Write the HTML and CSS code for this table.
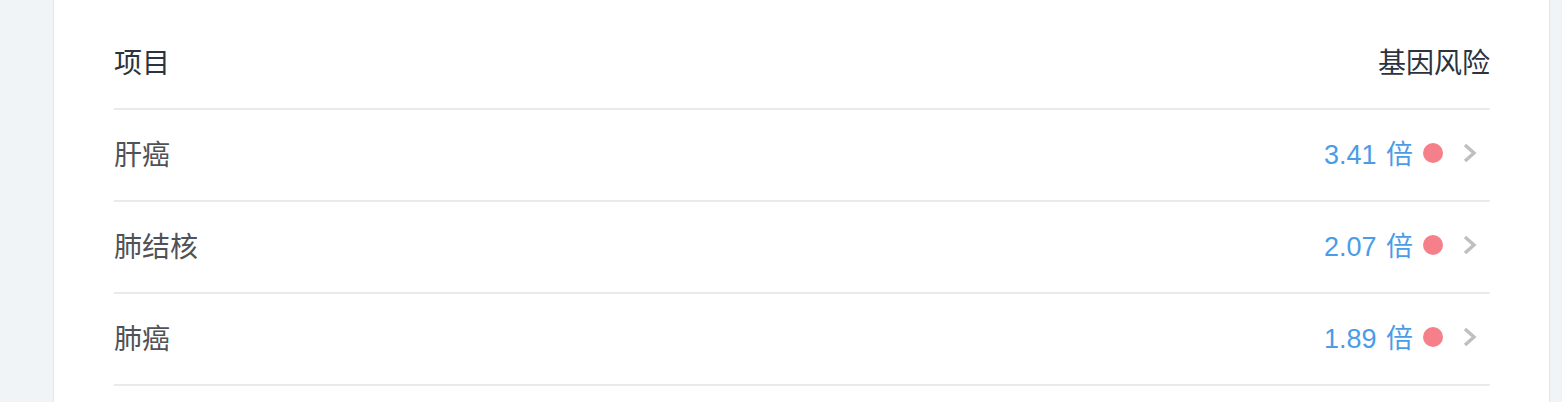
FILE: index.html
```html
<!DOCTYPE html>
<html lang="zh">
<head>
<meta charset="utf-8">
<link rel="stylesheet" href="styles.css">
</head>
<body>
<div class="page">
  <div class="card">
    <div class="row head">
      <span class="label">项目</span>
      <span class="label">基因风险</span>
    </div>
    <div class="row">
      <span class="name">肝癌</span>
      <span class="risk"><span class="value">3.41 倍</span><span class="dot"></span><svg class="chev" width="14" height="20" viewBox="0 0 14 20"><polyline points="2,2 11,10 2,18" fill="none" stroke="#bfbfbf" stroke-width="3.4"/></svg></span>
    </div>
    <div class="row">
      <span class="name">肺结核</span>
      <span class="risk"><span class="value">2.07 倍</span><span class="dot"></span><svg class="chev" width="14" height="20" viewBox="0 0 14 20"><polyline points="2,2 11,10 2,18" fill="none" stroke="#bfbfbf" stroke-width="3.4"/></svg></span>
    </div>
    <div class="row">
      <span class="name">肺癌</span>
      <span class="risk"><span class="value">1.89 倍</span><span class="dot"></span><svg class="chev" width="14" height="20" viewBox="0 0 14 20"><polyline points="2,2 11,10 2,18" fill="none" stroke="#bfbfbf" stroke-width="3.4"/></svg></span>
    </div>
  </div>
</div>
</body>
</html>
```

FILE: styles.css
```css
html, body {
  margin: 0;
  padding: 0;
  background: #f0f4f7;
}
body {
  font-family: "Liberation Sans", "Noto Sans CJK SC", sans-serif;
  height: 402px;
  overflow: hidden;
}
.page {
  padding-left: 53px;
  width: 1497px;
}
.card {
  background: #fff;
  border-left: 1px solid #e3e7ea;
  border-right: 1px solid #e3e7ea;
  padding: 18px 59px 0 60px;
  height: 384px;
}
.row {
  box-sizing: border-box;
  display: flex;
  justify-content: space-between;
  align-items: center;
  height: 92px;
  padding-bottom: 5px;
  border-bottom: 2px solid #e9eaeb;
}
.label {
  font-size: 28px;
  color: #2c3340;
}
.name {
  font-size: 28px;
  color: #4f5256;
}
.risk {
  display: flex;
  align-items: center;
}
.value {
  font-size: 27px;
  word-spacing: 2px;
  color: #4a9ce8;
}
.dot {
  width: 20px;
  height: 20px;
  border-radius: 50%;
  background: #f5808a;
  margin-left: 10px;
}
.chev {
  margin-left: 20px;
  margin-right: 13px;
}
```
